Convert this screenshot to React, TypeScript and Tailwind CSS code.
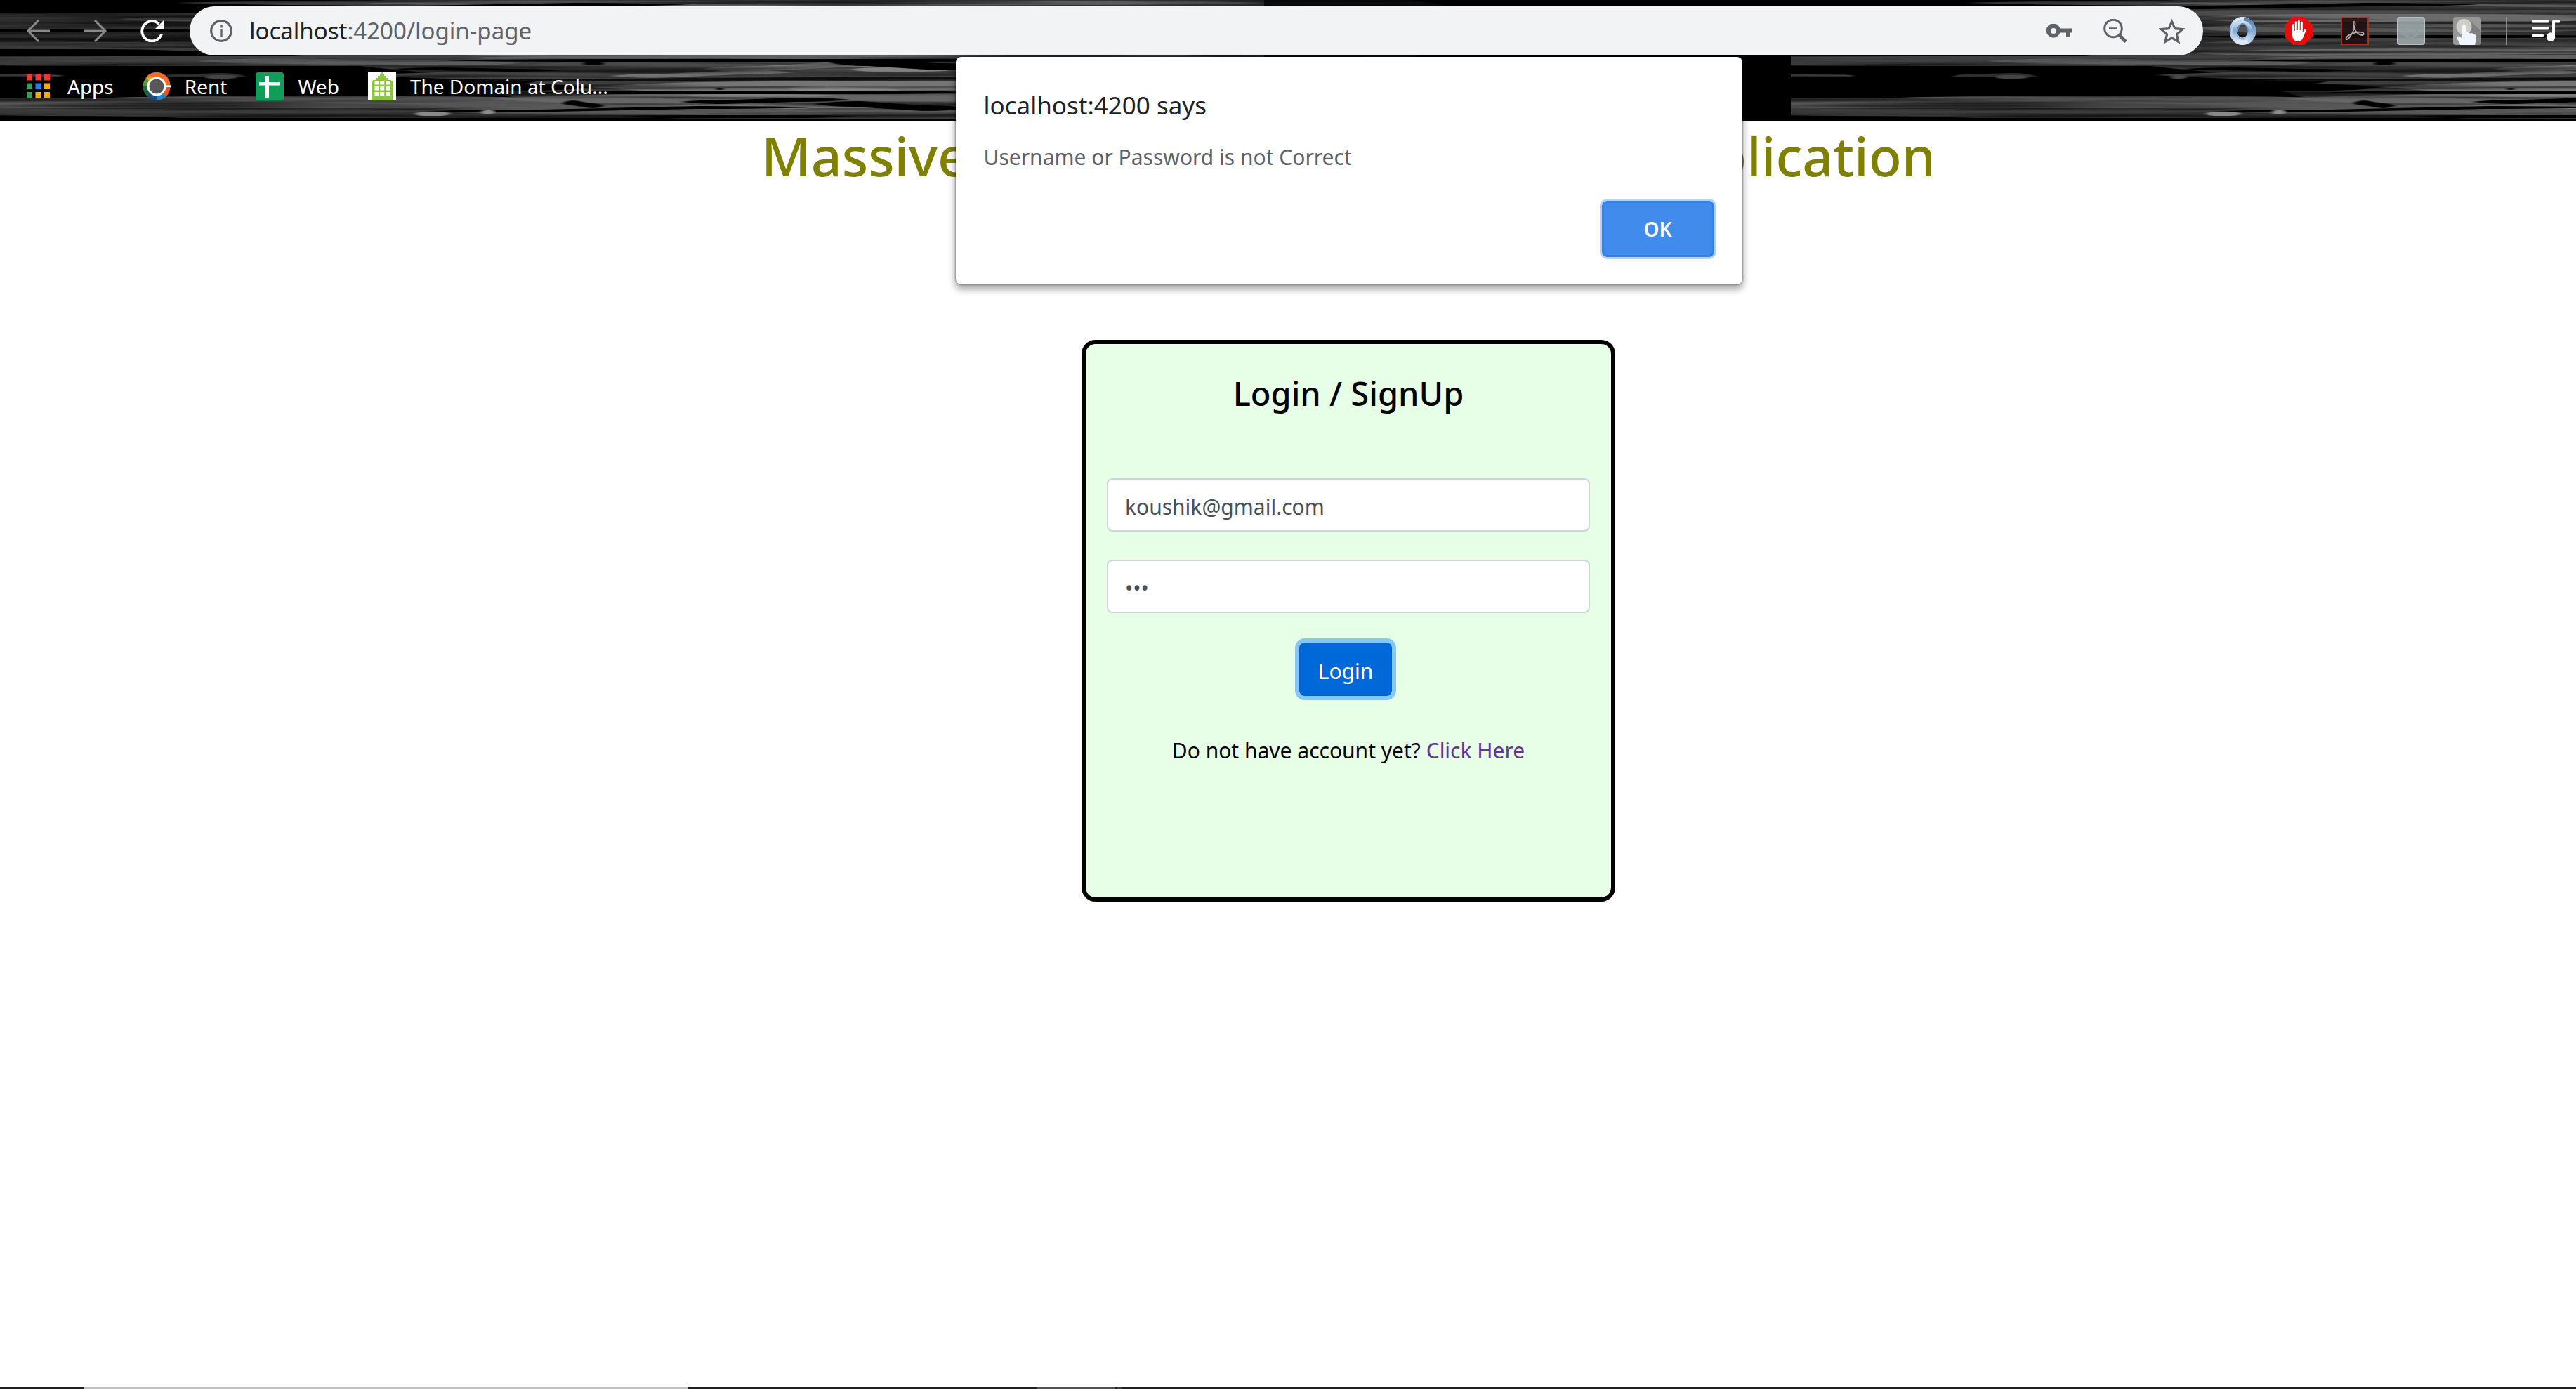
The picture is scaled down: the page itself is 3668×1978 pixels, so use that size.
import type { ReactNode } from "react";

type Streak = [x: number, y: number, width: number, height: number, fill: string, tilt?: number];

const TILE = 2550;

/* Wood planks of the browser theme, from back to front. */
const planks: Streak[] = [
  [420, -20, 1700, 80, "#343434"],
  [420, 50, 1600, 60, "#3a3a3a"],
  [700, 90, 1300, 80, "#3e3e3e"],
  [-500, 18, 1500, 24, "#303030"],
  [-500, 46, 1300, 18, "#2a2a2a"],
  [-500, 60, 1300, 12, "#3a3a3a"],
  [-600, 80, 2600, 14, "#404040"],
  [280, 83, 460, 8, "#5c5c5c", 3],
  [640, 79, 1100, 7, "#616161", -2],
  [700, 86, 900, 20, "#484848"],
  [520, 100, 1100, 14, "#424242"],
  [-60, 104, 150, 8, "#3c3c3c"],
  [230, 104, 120, 10, "#2f2f2f"],
  [840, 116, 900, 16, "#747474"],
  [-600, 140, 2300, 16, "#565656"],
  [100, 137, 700, 8, "#505050"],
  [700, 134, 900, 14, "#666666"],
  [-600, 154, 2300, 14, "#3a3a3a"],
  [600, 150, 900, 14, "#585858"],
  [250, 0, 1500, 8, "#3d3d3d"],
  [520, 2, 620, 5, "#5c5c5c"],
  [900, 4, 900, 6, "#5a5a5a", -3],
  [440, 14, 900, 14, "#4c4c4c"],
  [560, 20, 620, 12, "#6a6a6a"],
  [560, 34, 620, 12, "#555555"],
  [170, 24, 220, 6, "#555555", 2],
  [560, 55, 740, 16, "#424242"],
  [560, 70, 740, 10, "#666666", -3],
  [1000, 94, 280, 8, "#7b7b7b", -6],
  [1210, 96, 150, 6, "#828282"],
  [870, 105, 260, 6, "#7a7a7a", -5],
  [1120, 122, 170, 8, "#8a8a8a", 4],
  [970, 134, 220, 4, "#7d7d7d"],
  [960, 148, 360, 6, "#777777"],
  [1010, 150, 160, 5, "#8d8d8d"],
];

const cracks: Streak[] = [
  [-400, 0, 780, 14, "#000000", 4],
  [-200, 41, 410, 5, "#000000"],
  [-300, 70, 600, 9, "#000000"],
  [-400, 92, 770, 12, "#000000", 3],
  [-400, 110, 1100, 26, "#000000"],
  [560, 120, 280, 9, "#000000"],
  [100, 100, 120, 10, "#000000"],
  [440, 8, 540, 5, "#000000", -4],
  [560, 50, 640, 4, "#000000"],
  [620, 84, 900, 4, "#000000"],
  [1180, 84, 220, 10, "#000000", 6],
  [560, 96, 240, 4, "#050505", 2],
  [830, 88, 30, 5, "#000000"],
  [640, 112, 900, 4, "#0a0a0a", -3],
  [760, 129, 640, 5, "#000000"],
  [970, 142, 240, 6, "#000000", -3],
  [1160, 144, 220, 8, "#000000", 6],
  [800, 143, 60, 7, "#000000", 4],
  [600, 156, 560, 4, "#000000", -5],
  [880, 164, 340, 4, "#000000"],
  [-400, 162, 660, 6, "#000000", 3],
  [1020, 125, 10, 3, "#000000"],
];

const chips: Streak[] = [
  [590, 159, 52, 6, "#8a8a8a"],
  [684, 157, 22, 5, "#8e8e8e"],
  [290, 107, 50, 5, "#444444"],
  [540, 107, 24, 5, "#4a4a4a"],
];

function streakPath([x, y, w, h, , tilt = 0]: Streak) {
  const m = y + h / 2;
  return `M${x} ${m} Q${x + w * 0.12} ${y} ${x + w * 0.3} ${y} L${x + w * 0.7} ${y + tilt} Q${x + w * 0.9} ${y + tilt} ${x + w} ${m + tilt} Q${x + w * 0.88} ${y + h + tilt} ${x + w * 0.7} ${y + h + tilt} L${x + w * 0.25} ${y + h} Q${x + w * 0.1} ${y + h} ${x} ${m}Z`;
}

function StreakLayer({ streaks }: { streaks: Streak[] }) {
  return (
    <g filter="url(#soften)">
      {streaks.map((s, i) => (
        <path key={i} d={streakPath(s)} fill={s[4]} />
      ))}
    </g>
  );
}

function WoodTexture() {
  return (
    <svg className="absolute inset-0 h-full w-full" aria-hidden="true">
      <defs>
        <clipPath id="tile">
          <rect width={TILE} height="172" />
        </clipPath>
        <filter id="grain" x="0" y="0" width="100%" height="100%">
          <feTurbulence type="fractalNoise" baseFrequency="0.0018 0.13" numOctaves="3" seed="7" />
          <feColorMatrix values="0 0 0 0 0  0 0 0 0 0  0 0 0 0 0  3.5 0 0 0 -1.5" />
        </filter>
        <filter id="soften" x="0" y="0" width="100%" height="100%">
          <feGaussianBlur stdDeviation="3 0.7" />
        </filter>
        <g id="planks" clipPath="url(#tile)">
          <rect width={TILE} height="172" fill="#000" />
          <StreakLayer streaks={planks} />
          <rect width={TILE} height="172" filter="url(#grain)" opacity="0.6" />
          <StreakLayer streaks={cracks} />
          <StreakLayer streaks={chips} />
          <rect x="1800" width="750" height="172" fill="#000" opacity="0.7" />
          <rect y="169" width={TILE} height="3" fill="#000" />
        </g>
      </defs>
      <use href="#planks" />
      <use href="#planks" x={TILE} />
    </svg>
  );
}

function ArrowIcon({ forward = false }: { forward?: boolean }) {
  return (
    <svg viewBox="0 0 33 32" className="h-8 w-[33px]" fill="none" stroke="#8a8a8a" strokeWidth="3">
      {forward ? <path d="M0 16H31M16 1l15 15-15 15" /> : <path d="M33 16H2M17 1L2 16l15 15" />}
    </svg>
  );
}

function ReloadIcon() {
  return (
    <svg viewBox="0 0 34 32" className="h-8 w-[34px]">
      <path d="M30 20.500A14.200 14.200 0 1 1 26.500 6.200" fill="none" stroke="#fff" strokeWidth="3.800" />
      <path d="M34 0v14H20z" fill="#fff" />
    </svg>
  );
}

function InfoIcon() {
  return (
    <svg viewBox="0 0 32 32" className="h-8 w-8 shrink-0">
      <circle cx="16" cy="16" r="14.300" fill="none" stroke="#5f6368" strokeWidth="3.200" />
      <path d="M14.300 8h3.400v3.400h-3.400zM14.300 14h3.400v10h-3.400z" fill="#5f6368" />
    </svg>
  );
}

function KeyIcon() {
  return (
    <svg viewBox="0 0 36 20" className="h-5 w-9">
      <path
        fillRule="evenodd"
        fill="#5f6368"
        d="M19.300 6.500H36v6h-2v6.500h-6v-6.500h-8.700A10 10 0 1 1 19.300 6.500zM10 6a4 4 0 1 0 0 8 4 4 0 0 0 0-8z"
      />
    </svg>
  );
}

function ZoomOutIcon() {
  return (
    <svg viewBox="0 0 34 34" className="h-[34px] w-[34px]" fill="none" stroke="#5f6368">
      <circle cx="14" cy="13.500" r="12.300" strokeWidth="3" />
      <path d="M8 13.500h12" strokeWidth="2.500" />
      <path d="M22.500 22.500L32 32.500" strokeWidth="5" />
    </svg>
  );
}

function StarIcon() {
  return (
    <svg viewBox="0 0 37 36" className="h-9 w-[37px]" fill="none" stroke="#5f6368" strokeWidth="3.200">
      <path d="M18.500 4.500l4.300 10.200 11 .9-8.400 7.200 2.600 10.700-9.500-5.700-9.500 5.700 2.600-10.700-8.400-7.200 11-.9z" />
    </svg>
  );
}

function RingIcon() {
  return (
    <svg viewBox="0 0 40 40" className="h-10 w-10" fill="none">
      <defs>
        <linearGradient id="ringA" x1="0" y1="0" x2="0" y2="1">
          <stop offset="0" stopColor="#dbe9f6" />
          <stop offset="0.5" stopColor="#7fa6d0" />
          <stop offset="1" stopColor="#dbe9f6" />
        </linearGradient>
        <linearGradient id="ringB" x1="0" y1="0" x2="0" y2="1">
          <stop offset="0" stopColor="#5580b0" />
          <stop offset="1" stopColor="#b9d2ea" />
        </linearGradient>
      </defs>
      <ellipse cx="20" cy="20" rx="13" ry="14.800" stroke="url(#ringA)" strokeWidth="10.500" />
      <path d="M22 3C32 5 37 12 37 20c0 7-4 13-9 16" stroke="url(#ringB)" strokeWidth="5" />
      <path d="M13 22c0-7 3-12 8-12 4 1 7 5 7 10" stroke="#5f8bbd" strokeWidth="2" />
      <path d="M5 27C3 15 9 6 20 5" stroke="#bfd4ea" strokeWidth="2" />
      <path d="M12 24c2 6 6 9 12 7" stroke="#8fb2d8" strokeWidth="2" />
    </svg>
  );
}

function StopHandIcon() {
  return (
    <svg viewBox="0 0 40 40" className="h-10 w-10">
      <path d="M12 0h16l12 12v16L28 40H12L0 28V12z" fill="#e60d0d" />
      <path
        d="M11 12q0-2 1.400-2t1.400 2v8h1V8q0-2 1.500-2t1.500 2v11h1V6.500q0-2 1.500-2t1.500 2V19h1V8.500q0-2 1.500-2t1.500 2V22l2.500-4q1.600-2 3.200-1l-4.500 11q-2.300 7-7.500 7-8 0-8.500-9z"
        fill="#fff"
      />
    </svg>
  );
}

function AcrobatIcon() {
  return (
    <svg viewBox="0 0 40 40" className="h-10 w-10" fill="none">
      <rect x="1" y="1" width="38" height="38" fill="#1d0d0d" fillOpacity="0.85" stroke="#b5301f" strokeWidth="1.800" />
      <path
        d="M8 32c-2-2 2-6 8-8 5-2 10-3 14-2 4 1 3 4 0 4-4 0-9-5-11-10-1-4-2-9 0-9s2 5 0 10c-2 6-8 16-11 15z"
        stroke="#b9aeae"
        strokeWidth="1.800"
      />
    </svg>
  );
}

function ShieldIcon() {
  return (
    <svg viewBox="0 0 40 40" className="h-10 w-10">
      <rect x="1" y="1" width="38" height="38" rx="3" fill="#a9b1b1" fillOpacity="0.8" stroke="#b4c2cc" strokeWidth="2" />
      <path d="M12 12l8 4.500 8-4.500v14l-8 4.500-8-4.500z" fill="none" stroke="#8e9da5" strokeWidth="3.500" />
    </svg>
  );
}

function TouchIcon() {
  return (
    <svg viewBox="0 0 40 40" className="h-10 w-10">
      <rect width="40" height="40" rx="4" fill="#979797" />
      <path d="M25 6l15 15v15a4 4 0 0 1-4 4H20z" fill="#7e7e7e" />
      <circle cx="15.500" cy="14" r="11" fill="#cfcfca" />
      <path
        d="M13 14q0-3 2.500-3t2.500 3v9q4-2.500 6 .5 4-1.500 5 1.500 4-.5 4.200 3.500L31 40H10.500L5 30q0-3 3-2.500l5 3z"
        fill="#f0f6ff"
      />
    </svg>
  );
}

function MusicIcon() {
  return (
    <svg viewBox="0 0 40 32" className="h-8 w-10">
      <path d="M2 2.500h21M2 12.500h21M2 22.500h13" stroke="#fff" strokeWidth="4" strokeLinecap="round" />
      <path d="M31 24V2.500h7.500" fill="none" stroke="#fff" strokeWidth="4" strokeLinecap="round" strokeLinejoin="round" />
      <circle cx="27" cy="24.500" r="6.300" fill="#fff" />
    </svg>
  );
}

function AppsIcon() {
  const colours = ["#f4352c", "#f4352c", "#f4352c", "#2f9e57", "#1a85ff", "#f7a90c", "#2f9e57", "#f7a90c", "#f7a90c"];
  return (
    <svg viewBox="0 0 40 40" className="h-10 w-10">
      {colours.map((c, i) => (
        <rect key={i} x={2 + (i % 3) * 12.500} y={3 + Math.floor(i / 3) * 12.500} width="8" height="8.500" fill={c} />
      ))}
    </svg>
  );
}

function RentIcon() {
  return (
    <svg viewBox="0 0 40 40" className="h-10 w-10" fill="none" strokeWidth="7">
      <path d="M7 10A16 16 0 0 1 36 19" stroke="#ee6c2b" />
      <path d="M4 20A16 16 0 0 1 10 8" stroke="#5a9a35" />
      <path d="M8 11l5-4" stroke="#f0a020" />
      <path d="M4 19A16 16 0 0 0 10 32" stroke="#1d6b3b" />
      <path d="M9 31A16 16 0 0 0 21 36" stroke="#154f86" />
      <path d="M20 36A16 16 0 0 0 32 31" stroke="#1b87cf" />
      <path d="M31 32A16 16 0 0 0 36 22" stroke="#e0531f" />
      <circle cx="20" cy="20" r="12" fill="#58585a" stroke="#fff" strokeWidth="3" />
      <path d="M31 20h9" stroke="#fff" strokeWidth="3" />
    </svg>
  );
}

function SheetIcon() {
  return (
    <svg viewBox="0 0 40 40" className="h-10 w-10">
      <rect width="40" height="40" rx="3.500" fill="#0f9d58" />
      <path d="M13.500 5h5.500v9h16v4.500H19V36h-5.500V18.500H5V14h8.500z" fill="#fff" />
    </svg>
  );
}

function BuildingIcon() {
  return (
    <svg viewBox="0 0 40 40" className="h-10 w-10">
      <rect width="40" height="40" fill="#fff" />
      <path d="M5 40V13h2v-2h4V8h3V5h3V2h2V0h2v2h2v3h3v3h3v3h4v2h2v27z" fill="#8cc63f" />
      {[12, 20, 28].map((y) =>
        [9.500, 17.200, 25].map((x) => <rect key={`${x}-${y}`} x={x} y={y} width="6" height="5.500" fill="#fff" />),
      )}
    </svg>
  );
}

function IconButton({ label, children }: { label: string; children: ReactNode }) {
  return (
    <button type="button" aria-label={label} className="shrink-0">
      {children}
    </button>
  );
}

const bookmarks = [
  { label: "Apps", icon: <AppsIcon /> },
  { label: "Rent", icon: <RentIcon /> },
  { label: "Web", icon: <SheetIcon /> },
  { label: "The Domain at Colu...", icon: <BuildingIcon /> },
];

function BrowserHeader() {
  return (
    <header className="relative overflow-hidden bg-black">
      <WoodTexture />
      <div className="relative flex items-center pt-[9px] pr-[23px] pl-[38px]">
        <div className="flex items-center gap-12">
          <IconButton label="Back"><ArrowIcon /></IconButton>
          <IconButton label="Forward"><ArrowIcon forward /></IconButton>
          <IconButton label="Reload"><ReloadIcon /></IconButton>
        </div>
        <div className="ml-9 flex h-[70px] flex-1 items-center rounded-full bg-[#f1f3f4] pr-[26px] pl-[29px]">
          <IconButton label="Site information"><InfoIcon /></IconButton>
          <div role="textbox" aria-label="Address" className="ml-6 flex-1 text-[33px] leading-[44px] text-[#5f6368]">
            <span className="text-[#202124]">localhost</span>:4200/login-page
          </div>
          <div className="flex items-center gap-[45px]">
            <IconButton label="Passwords"><KeyIcon /></IconButton>
            <IconButton label="Zoom"><ZoomOutIcon /></IconButton>
            <IconButton label="Bookmark this page"><StarIcon /></IconButton>
          </div>
        </div>
        <div className="ml-9 flex items-center gap-10">
          <IconButton label="JSON viewer"><RingIcon /></IconButton>
          <IconButton label="Ad blocker"><StopHandIcon /></IconButton>
          <IconButton label="Acrobat"><AcrobatIcon /></IconButton>
          <IconButton label="Web protection"><ShieldIcon /></IconButton>
          <IconButton label="Touch"><TouchIcon /></IconButton>
        </div>
        <div className="mx-[35px] h-10 w-[2px] bg-[#8b8b8b]" />
        <IconButton label="Media controls"><MusicIcon /></IconButton>
      </div>
      <nav aria-label="Bookmarks" className="relative flex items-center gap-[41px] pt-[22px] pb-[27px] pl-9">
        {bookmarks.map(({ label, icon }) => (
          <a key={label} href="#" className="flex items-center gap-5 text-[28px] leading-[44px] text-white">
            {icon}
            {label}
          </a>
        ))}
      </nav>
    </header>
  );
}

function AlertDialog() {
  return (
    <div className="absolute inset-x-0 top-[81px] z-10 flex justify-center pl-[173px]">
      <div
        role="alertdialog"
        aria-labelledby="alert-title"
        aria-describedby="alert-text"
        className="flex w-[1120px] flex-col rounded-lg bg-white px-10 pt-[45px] pb-[39px] shadow-[0_0_2px_1px_rgba(0,0,0,0.3),0_6px_10px_2px_rgba(0,0,0,0.3)]"
      >
        <h2 id="alert-title" className="text-[35px] leading-[48px] text-[#202124]">localhost:4200 says</h2>
        <p id="alert-text" className="mt-7 text-[30px] leading-[44px] text-[#5f6368]">
          Username or Password is not Correct
        </p>
        <button
          type="button"
          className="mt-10 h-20 w-40 self-end rounded-lg border-[3px] border-[#3380e8] bg-[#418bec] text-[28px] font-semibold text-white ring-[3px] ring-[#b5d3f8]"
        >
          OK
        </button>
      </div>
    </div>
  );
}

function LoginCard() {
  const field =
    "h-[76px] w-full rounded-lg border-2 border-[#ced4da] bg-white px-6 pt-1 text-[30px] text-[#495057]";
  return (
    <form className="mt-[214px] flex min-h-[800px] w-[760px] flex-col items-center rounded-[20px] border-[6px] border-black bg-[#e6ffe6] px-[30px] pt-10">
      <h2 className="text-[47px] leading-[60px] font-medium text-black">Login / SignUp</h2>
      <input type="email" aria-label="Email" defaultValue="koushik@gmail.com" className={`mt-[91px] ${field}`} />
      <input type="password" aria-label="Password" defaultValue="abc" className={`mt-10 ${field}`} />
      <button
        type="button"
        className="mt-[42px] mr-2 h-[76px] w-[132px] rounded-lg border-2 border-[#0062cc] bg-[#0069d9] pt-1 text-[30px] text-white ring-[6px] ring-[#88c7f5]"
      >
        Login
      </button>
      <p className="mt-14 text-[30px] leading-[44px] text-black">
        Do not have account yet?{" "}
        <a href="#" className="text-[#663399]">Click Here</a>
      </p>
    </form>
  );
}

export default function App() {
  return (
    <div className="relative flex min-h-screen flex-col overflow-x-hidden bg-white font-['Noto_Sans',sans-serif]">
      <BrowserHeader />
      <AlertDialog />
      <main className="flex flex-1 flex-col items-center pt-[2px] pl-[172px]">
        <h1 className="flex w-[1672px] justify-between text-[77px] leading-[96px] font-medium text-[#808000]">
          <span>Massive</span>
          <span>Application</span>
        </h1>
        <LoginCard />
      </main>
      <footer className="flex h-[3px] bg-[#1d2125]">
        <div className="ml-[120px] w-[860px] bg-[#c1c1c1]" />
        <div className="ml-[496px] w-[112px] bg-[#4d5054]" />
        <div className="ml-[3px] w-[6px] bg-[#3a3d41]" />
      </footer>
    </div>
  );
}
